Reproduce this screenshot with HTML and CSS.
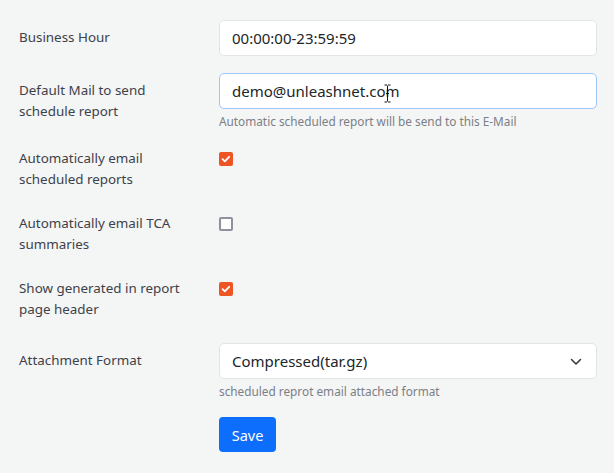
FILE: index.html
```html
<!DOCTYPE html>
<html>
<head>
<meta charset="utf-8">
<link rel="stylesheet" href="styles.css">
</head>
<body>
<form class="settings">
  <div class="row">
    <label class="lbl">Business Hour</label>
    <div class="ctl"><div class="input">00:00:00-23:59:59</div></div>
  </div>
  <div class="row row-help">
    <label class="lbl">Default Mail to send<br>schedule report</label>
    <div class="ctl">
      <div class="input focus">demo@unleashnet.co<span class="caret-host">m<svg class="ibeam" width="7" height="19" viewBox="0 0 7 19"><path d="M0.5 1h2.5M4 1h2.5M3.5 1.5v16M0.5 18h2.5M4 18h2.5M2 9.5h3" stroke="#111" stroke-width="1" fill="none"/></svg></span></div>
      <div class="help">Automatic scheduled report will be send to this E-Mail</div>
    </div>
  </div>
  <div class="row row-check">
    <label class="lbl">Automatically email<br>scheduled reports</label>
    <div class="ctl"><span class="cb on"><svg width="14" height="14" viewBox="0 0 14 14"><path d="M3.6 7.2l2.2 2.2 4.4-4.6" stroke="#fff" stroke-width="1.8" fill="none" stroke-linecap="round" stroke-linejoin="round"/></svg></span></div>
  </div>
  <div class="row row-check">
    <label class="lbl">Automatically email TCA<br>summaries</label>
    <div class="ctl"><span class="cb"></span></div>
  </div>
  <div class="row row-check last-check">
    <label class="lbl">Show generated in report<br>page header</label>
    <div class="ctl"><span class="cb on"><svg width="14" height="14" viewBox="0 0 14 14"><path d="M3.6 7.2l2.2 2.2 4.4-4.6" stroke="#fff" stroke-width="1.8" fill="none" stroke-linecap="round" stroke-linejoin="round"/></svg></span></div>
  </div>
  <div class="row row-help">
    <label class="lbl">Attachment Format</label>
    <div class="ctl">
      <div class="input select">Compressed(tar.gz)<svg class="chev" width="12" height="8" viewBox="0 0 12 8"><path d="M1.5 1.5l4.5 4.5 4.5-4.5" stroke="#343a40" stroke-width="1.6" fill="none" stroke-linecap="round" stroke-linejoin="round"/></svg></div>
      <div class="help">scheduled reprot email attached format</div>
    </div>
  </div>
  <div class="row">
    <div class="lbl"></div>
    <div class="ctl"><button type="button" class="btn">Save</button></div>
  </div>
</form>
</body>
</html>
```
FILE: styles.css
```css
html, body {
  margin: 0;
  padding: 0;
  background: #f4f5f5;
}
body {
  font-family: "Noto Sans", Lato, sans-serif;
  color: #3b4047;
}
.settings {
  padding: 20px 17px 0 19px;
  display: flex;
  flex-direction: column;
}
.row {
  display: grid;
  grid-template-columns: 200px 378px;
  margin-bottom: 17px;
}
.row-help {
  margin-bottom: 11px;
}
.row-check {
  margin-bottom: 16px;
}
.row-check.last-check {
  margin-bottom: 23px;
}
.lbl {
  font-size: 13.4px;
  line-height: 21px;
  padding-top: 7px;
  color: #3d4249;
}
.ctl {
  display: flex;
  flex-direction: column;
  align-items: flex-start;
}
.input {
  position: relative;
  box-sizing: border-box;
  width: 378px;
  height: 36px;
  background: #fff;
  border: 1px solid #e2e4e6;
  border-radius: 5px;
  padding: 0 12px;
  font-size: 15px;
  line-height: 34px;
  color: #212529;
}
.input.focus {
  border-color: #9ec5fe;
}
.caret-host {
  position: relative;
}
.ibeam {
  position: absolute;
  left: -1px;
  top: 3px;
}
.chev {
  position: absolute;
  right: 14px;
  top: 14px;
}
.help {
  margin-top: 4px;
  font-size: 11.8px;
  line-height: 17px;
  color: #7b8087;
}
.cb {
  box-sizing: border-box;
  width: 14px;
  height: 14px;
  margin-top: 11px;
  border: 2px solid #8e919c;
  border-radius: 2px;
  background: #fff;
  display: block;
}
.cb.on {
  border: none;
  background: #ee5524;
}
.cb svg {
  display: block;
}
.btn {
  width: 57px;
  height: 35px;
  margin-top: 6px;
  border: none;
  border-radius: 4px;
  background: #0d6efd;
  color: #fff;
  font-family: "Noto Sans", Lato, sans-serif;
  font-size: 14.5px;
  padding: 0;
}
```
